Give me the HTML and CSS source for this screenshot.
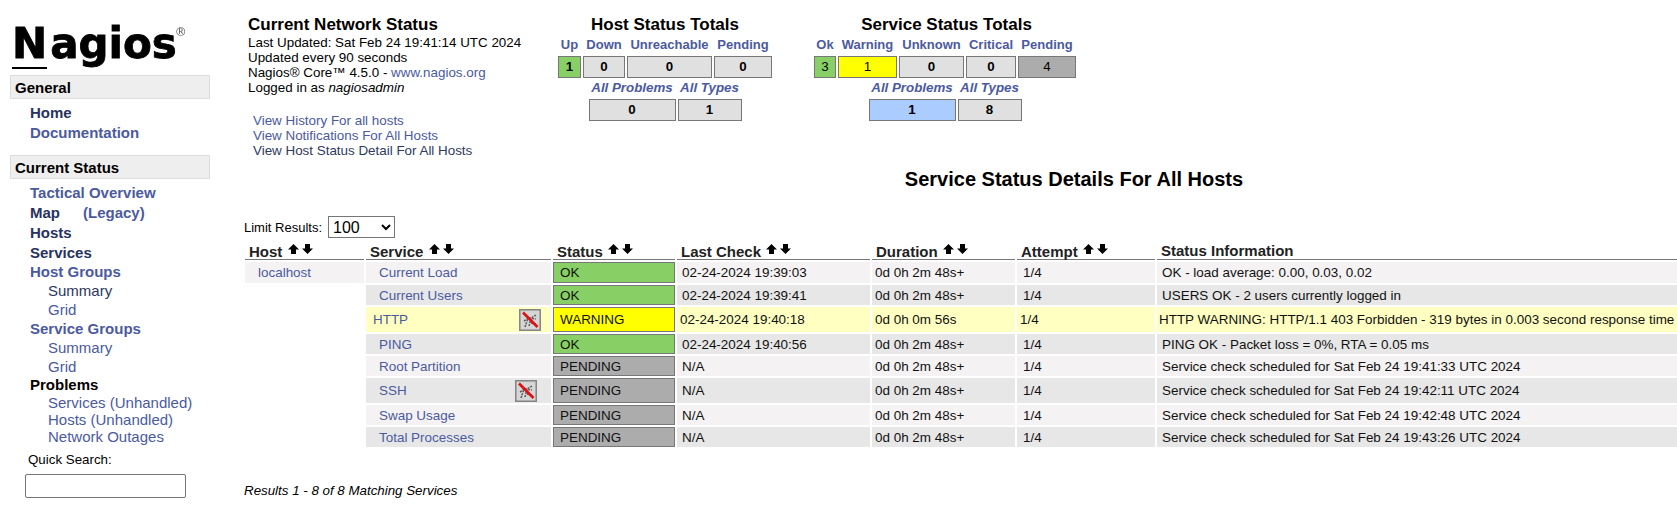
FILE: index.html
```html
<!DOCTYPE html>
<html lang="en">
<head>
<meta charset="utf-8">
<title>Nagios Core</title>
<link rel="stylesheet" href="styles.css">
</head>
<body>
<svg class="defs" width="0" height="0" aria-hidden="true">
  <symbol id="up" viewBox="0 0 11 10"><path d="M5.5 0 11 5.5H8V10H3V5.5H0Z"/></symbol>
  <symbol id="down" viewBox="0 0 11 10"><path d="M3 0H8V4.5H11L5.5 10 0 4.5H3Z"/></symbol>
  <symbol id="nonotif" viewBox="0 0 22 22">
    <rect x=".75" y=".75" width="20.5" height="20.5" fill="#cfcfcf" stroke="#868686" stroke-width="1.5"/>
    <rect x="2" y="2" width="18" height="18" fill="#d6d6d6"/>
    <path d="M6 18 9 9M10 17l2-8 5-3M5 12l5-3 7 1M12 14l5 1" stroke="#5a5a5a" stroke-width="1.5" fill="none" stroke-dasharray="2 1"/>
    <path d="M4 3.5 18.5 18" stroke="#dd1111" stroke-width="2.6"/>
  </symbol>
</svg>
<div class="page">
  <aside class="side">
    <div class="logo"><span class="logo-n">N</span>agios<span class="logo-r">®</span></div>
    <h2 class="bar bar-first">General</h2>
    <ul class="nav">
      <li><a class="dark" href="#">Home</a></li>
      <li><a href="#">Documentation</a></li>
    </ul>
    <h2 class="bar">Current Status</h2>
    <ul class="nav">
      <li><a href="#">Tactical Overview</a></li>
      <li><a class="dark" href="#">Map</a><a class="legacy" href="#">(Legacy)</a></li>
      <li><a class="dark" href="#">Hosts</a></li>
      <li class="group"><a class="dark" href="#">Services</a></li>
      <li class="group"><a href="#">Host Groups</a></li>
      <li class="sub"><a class="dark" href="#">Summary</a></li>
      <li class="sub"><a href="#">Grid</a></li>
      <li class="group"><a href="#">Service Groups</a></li>
      <li class="sub"><a href="#">Summary</a></li>
      <li class="sub"><a href="#">Grid</a></li>
      <li class="plain">Problems</li>
      <li class="sub tight"><a href="#">Services</a> (<a href="#">Unhandled</a>)</li>
      <li class="sub tight"><a href="#">Hosts</a> (<a href="#">Unhandled</a>)</li>
      <li class="sub tight"><a href="#">Network Outages</a></li>
    </ul>
    <label class="qs-label" for="qs">Quick Search:</label>
    <input class="qs" id="qs" type="text">
  </aside>
  <main class="main">
    <section class="top">
      <div class="info">
        <h1 class="info-title">Current Network Status</h1>
        <p>Last Updated: Sat Feb 24 19:41:14 UTC 2024</p>
        <p>Updated every 90 seconds</p>
        <p>Nagios® Core™ 4.5.0 - <a href="#">www.nagios.org</a></p>
        <p>Logged in as <em>nagiosadmin</em></p>
        <div class="views">
          <a href="#">View History For all hosts</a>
          <a href="#">View Notifications For All Hosts</a>
          <a class="dark-link" href="#">View Host Status Detail For All Hosts</a>
        </div>
      </div>
      <div class="totals totals-host">
        <h2 class="totals-title">Host Status Totals</h2>
        <div class="grid host-grid">
          <a href="#">Up</a><a href="#">Down</a><a href="#">Unreachable</a><a href="#">Pending</a>
          <b class="ok">1</b><b>0</b><b>0</b><b>0</b>
        </div>
        <div class="grid all-grid">
          <a href="#"><i>All Problems</i></a><a href="#"><i>All Types</i></a>
          <b>0</b><b>1</b>
        </div>
      </div>
      <div class="totals totals-service">
        <h2 class="totals-title service-title">Service Status Totals</h2>
        <div class="grid service-grid">
          <a href="#">Ok</a><a href="#">Warning</a><a href="#">Unknown</a><a href="#">Critical</a><a href="#">Pending</a>
          <b class="ok thin">3</b><b class="warn">1</b><b>0</b><b>0</b><b class="pend">4</b>
        </div>
        <div class="grid all-grid">
          <a href="#"><i>All Problems</i></a><a href="#"><i>All Types</i></a>
          <b class="blue">1</b><b>8</b>
        </div>
      </div>
    </section>
    <h1 class="page-title">Service Status Details For All Hosts</h1>
    <div class="limit">
      <label for="lim">Limit Results:</label>
      <select id="lim" class="limit-select"><option>100</option></select>
    </div>
    <div class="table-wrap">
    <table class="status">
      <colgroup>
        <col class="c-host"><col class="c-service"><col class="c-status"><col class="c-check"><col class="c-dur"><col class="c-att"><col class="c-info">
      </colgroup>
      <thead>
        <tr>
          <th>Host <span class="sort"><svg><use href="#up"/></svg><svg><use href="#down"/></svg></span></th>
          <th>Service <span class="sort"><svg><use href="#up"/></svg><svg><use href="#down"/></svg></span></th>
          <th>Status <span class="sort"><svg><use href="#up"/></svg><svg><use href="#down"/></svg></span></th>
          <th>Last Check <span class="sort"><svg><use href="#up"/></svg><svg><use href="#down"/></svg></span></th>
          <th>Duration <span class="sort"><svg><use href="#up"/></svg><svg><use href="#down"/></svg></span></th>
          <th>Attempt <span class="sort"><svg><use href="#up"/></svg><svg><use href="#down"/></svg></span></th>
          <th class="th-info">Status Information</th>
        </tr>
      </thead>
      <tbody>
        <tr class="odd first">
          <td class="host"><a href="#">localhost</a></td>
          <td class="svc"><a href="#">Current Load</a></td>
          <td class="st ok">OK</td>
          <td class="chk">02-24-2024 19:39:03</td><td class="dur">0d 0h 2m 48s+</td><td class="att">1/4</td>
          <td class="inf">OK - load average: 0.00, 0.03, 0.02</td>
        </tr>
        <tr class="even">
          <td class="blank"></td>
          <td class="svc"><a href="#">Current Users</a></td>
          <td class="st ok">OK</td>
          <td class="chk">02-24-2024 19:39:41</td><td class="dur">0d 0h 2m 48s+</td><td class="att">1/4</td>
          <td class="inf">USERS OK - 2 users currently logged in</td>
        </tr>
        <tr class="warnrow tall">
          <td class="blank"></td>
          <td class="svc"><div class="svc-flex"><a href="#">HTTP</a><svg class="nn" role="img" aria-label="Notifications disabled"><use href="#nonotif"/></svg></div></td>
          <td class="st warn">WARNING</td>
          <td class="chk">02-24-2024 19:40:18</td><td class="dur">0d 0h 0m 56s</td><td class="att">1/4</td>
          <td class="inf">HTTP WARNING: HTTP/1.1 403 Forbidden - 319 bytes in 0.003 second response time</td>
        </tr>
        <tr class="even">
          <td class="blank"></td>
          <td class="svc"><a href="#">PING</a></td>
          <td class="st ok">OK</td>
          <td class="chk">02-24-2024 19:40:56</td><td class="dur">0d 0h 2m 48s+</td><td class="att">1/4</td>
          <td class="inf">PING OK - Packet loss = 0%, RTA = 0.05 ms</td>
        </tr>
        <tr class="odd">
          <td class="blank"></td>
          <td class="svc"><a href="#">Root Partition</a></td>
          <td class="st pend">PENDING</td>
          <td class="chk">N/A</td><td class="dur">0d 0h 2m 48s+</td><td class="att">1/4</td>
          <td class="inf">Service check scheduled for Sat Feb 24 19:41:33 UTC 2024</td>
        </tr>
        <tr class="even tall">
          <td class="blank"></td>
          <td class="svc"><div class="svc-flex ssh"><a href="#">SSH</a><svg class="nn" role="img" aria-label="Notifications disabled"><use href="#nonotif"/></svg></div></td>
          <td class="st pend">PENDING</td>
          <td class="chk">N/A</td><td class="dur">0d 0h 2m 48s+</td><td class="att">1/4</td>
          <td class="inf">Service check scheduled for Sat Feb 24 19:42:11 UTC 2024</td>
        </tr>
        <tr class="odd">
          <td class="blank"></td>
          <td class="svc"><a href="#">Swap Usage</a></td>
          <td class="st pend">PENDING</td>
          <td class="chk">N/A</td><td class="dur">0d 0h 2m 48s+</td><td class="att">1/4</td>
          <td class="inf">Service check scheduled for Sat Feb 24 19:42:48 UTC 2024</td>
        </tr>
        <tr class="even">
          <td class="blank"></td>
          <td class="svc"><a href="#">Total Processes</a></td>
          <td class="st pend">PENDING</td>
          <td class="chk">N/A</td><td class="dur">0d 0h 2m 48s+</td><td class="att">1/4</td>
          <td class="inf">Service check scheduled for Sat Feb 24 19:43:26 UTC 2024</td>
        </tr>
      </tbody>
    </table>
    </div>
    <p class="results">Results 1 - 8 of 8 Matching Services</p>
  </main>
</div>
</body>
</html>
```
FILE: styles.css
```css
* { box-sizing: border-box; }
html, body { margin: 0; padding: 0; height: 506px; overflow: hidden; background: #fff; }
body { font-family: "Liberation Sans", Arial, sans-serif; font-size: 13.4px; color: #000; }
a { color: #4b5a9f; text-decoration: none; }
h1, h2, p, ul { margin: 0; padding: 0; }
ul { list-style: none; }
.defs { position: absolute; }
.page { display: flex; width: 100%; overflow: hidden; }

.side { width: 243px; flex: none; padding: 0 0 0 10px; }
.logo { height: 75px; padding: 6px 0 0 2px; font-family: "DejaVu Sans", sans-serif; font-weight: 700; font-size: 42px; line-height: 52px; -webkit-text-stroke: .8px #000; filter: blur(.5px); white-space: nowrap; }
.logo-n { display: inline-block; height: 50px; border-bottom: 2px solid #000; line-height: 50px; margin-right: 3px; }
.logo-r { font-size: 12px; font-weight: 400; color: #555; -webkit-text-stroke: 0; vertical-align: 22px; margin-left: -2px; }
.bar { width: 200px; height: 24px; padding-left: 4px; background: #eee; border: 1px solid #ddd; font-size: 15px; line-height: 24px; font-weight: 700; }
.nav { margin: 4px 0 0 20px; padding-bottom: 12px; font-size: 15px; line-height: 20px; font-weight: 700; }
.dark { color: #27325f; }
.legacy { margin-left: 23px; font-weight: 700; }
.group { line-height: 19px; }
.plain { line-height: 18px; font-weight: 700; color: #000; }
.sub { margin-left: 18px; font-weight: 400; font-size: 15px; line-height: 19px; color: #4b5a9f; }
.sub .dark { color: #2c3760; }
.tight { line-height: 17px; }
.qs-label { display: block; margin: 7px 0 0 18px; font-size: 13.33px; line-height: 16px; }
.nav:last-of-type { padding-bottom: 0; }
.qs { display: block; width: 161px; height: 24px; margin: 6px 0 0 15px; border: 1px solid #767676; border-radius: 2px; background: #fff; }

.main { flex: 1; min-width: 0; }
.top { display: flex; height: 170px; padding: 15px 0 0 5px; }
.info { width: 289px; flex: none; font-size: 13.4px; line-height: 15px; }
.info-title { font-size: 17px; line-height: 18px; padding-top: 1px; font-weight: 700; margin-bottom: 1px; }
.views { display: flex; flex-direction: column; margin: 18px 0 0 5px; }
.views a { line-height: 15px; }
.views .dark-link { color: #2e3a5e; }
.totals { flex: none; display: flex; flex-direction: column; align-items: center; }
.totals-host { width: 214px; margin-left: 21px; }
.totals-service { width: 262px; margin-left: 42px; }
.totals-title { font-size: 17px; line-height: 18px; padding-top: 1px; font-weight: 700; white-space: nowrap; }
.service-title { padding-left: 3px; }
.grid { display: grid; column-gap: 2px; justify-items: stretch; text-align: center; }
.grid a { font-size: 13px; line-height: 20px; height: 21px; font-weight: 700; white-space: nowrap; }
.grid b { display: block; height: 22px; line-height: 20px; border: 1px solid #777; background: #e0e0e0; font-weight: 700; font-size: 13.33px; }
.host-grid { grid-template-columns: 23px 42px 85px 58px; margin-top: 1px; }
.service-grid { grid-template-columns: 22px 59px 65px 50px 58px; margin-top: 1px; }
.all-grid { grid-template-columns: 87px 64px; margin-top: 0; }
.all-grid a { height: 21px; font-size: 13.33px; }
.grid b.ok { background: #88d066; }
.grid b.thin { font-weight: 400; }
.grid b.warn { background: #ff0; font-weight: 400; }
.grid b.pend { background: #acacac; font-weight: 400; }
.grid b.blue { background: #acf; }

.page-title { padding-left: 228px; font-size: 20px; line-height: 22px; text-align: center; font-weight: 700; margin-top: -2px; }
.limit { display: flex; align-items: center; gap: 6px; height: 22px; margin-top: 26px; padding-left: 1px; font-size: 13px; }
.limit-select { width: 67px; height: 22px; font-family: "Liberation Sans", Arial, sans-serif; font-size: 16px; background: #fff; }

.table-wrap { overflow: hidden; margin-top: -2px; }
.status { table-layout: fixed; width: 1436px; border-collapse: separate; border-spacing: 2px; font-size: 13.45px; }
.c-host { width: 119px; } .c-service { width: 185px; } .c-status { width: 122px; } .c-check { width: 193px; }
.c-dur { width: 143px; } .c-att { width: 138px; }
th { height: 22px; padding: 0 0 0 4px; border-bottom: 1px solid #777; text-align: left; font-size: 15px; font-weight: 700; color: #222; line-height: 14px; vertical-align: bottom; white-space: nowrap; }
.sort { display: inline-flex; gap: 3px; vertical-align: 3px; margin-left: 1px; }
.sort svg { width: 11px; height: 10px; display: block; }
.th-info { line-height: 16px; }
td { height: 20px; padding: 0; line-height: 15px; white-space: nowrap; color: #111; }
tr.first td { height: 21px; }
tr.tall td { height: 25px; }
.odd td { background: #f4f2f2; }
.even td { background: #e7e7e7; }
.warnrow td { background: #feffc1; }
td.blank { background: transparent; }
.host { padding-left: 13px; }
.svc { padding-left: 13px; }
.svc-flex { display: flex; align-items: center; justify-content: space-between; padding-right: 14px; }
.warnrow .svc { padding-left: 7px; }
.warnrow .svc-flex { padding-right: 10px; }
.ssh { padding-right: 14px; }
.nn { width: 22px; height: 22px; flex: none; display: block; }
.chk { padding-left: 5px; }
.dur { padding-left: 3px; }
.att { padding-left: 6px; }
.inf { padding-left: 5px; }
.warnrow .chk, .warnrow .dur, .warnrow .att { padding-left: 3px; }
.warnrow .inf { padding-left: 2px; }
td.st { padding-left: 6px; border: 1px solid #777; }
td.st.ok { background: #88d066; }
td.st.warn { background: #ff0; }
td.st.pend { background: #acacac; }
.results { margin-top: 34px; font-size: 13.33px; line-height: 15px; font-style: italic; padding-left: 1px; }
```
